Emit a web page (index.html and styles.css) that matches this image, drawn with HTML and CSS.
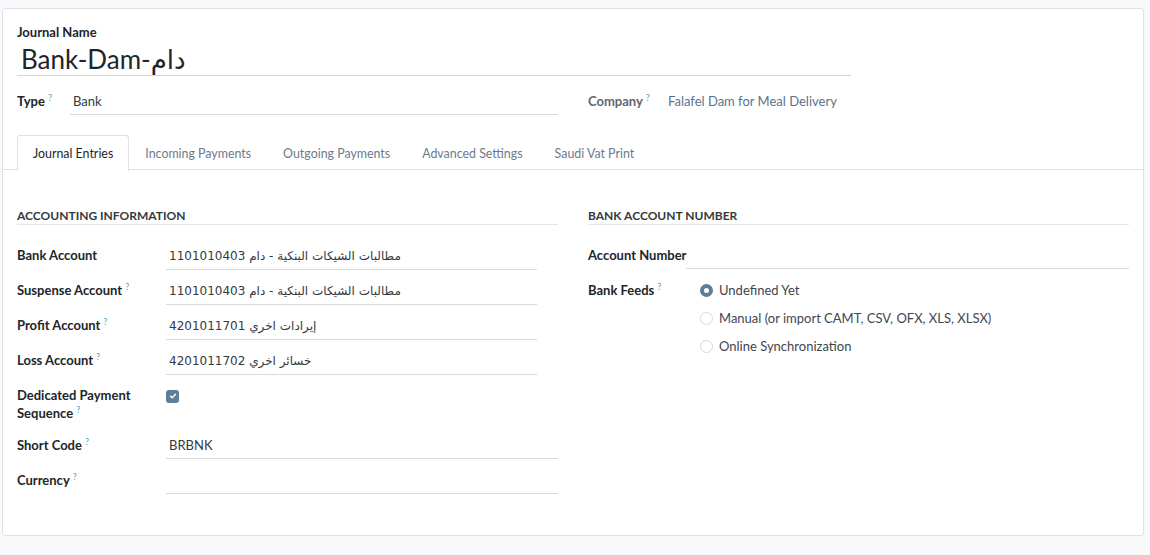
FILE: index.html
```html
<!DOCTYPE html>
<html lang="en">
<head>
<meta charset="utf-8">
<title>Journal</title>
<link rel="stylesheet" href="styles.css">
</head>
<body>
<div class="sheet">
  <div class="head">
    <div class="title-label">Journal Name</div>
    <div class="title-field">Bank-Dam-دام</div>
    <div class="top-row">
      <div class="pair">
        <div class="lbl lbl-type">Type<sup>?</sup></div>
        <div class="val val-type">Bank</div>
      </div>
      <div class="pair">
        <div class="lbl lbl-muted lbl-company">Company<sup>?</sup></div>
        <div class="val-link">Falafel Dam for Meal Delivery</div>
      </div>
    </div>
  </div>

  <div class="tabs">
    <div class="tab active">Journal Entries</div>
    <div class="tab">Incoming Payments</div>
    <div class="tab">Outgoing Payments</div>
    <div class="tab">Advanced Settings</div>
    <div class="tab">Saudi Vat Print</div>
  </div>

  <div class="content">
    <div class="group">
      <div class="sep">ACCOUNTING INFORMATION</div>
      <div class="row">
        <div class="lbl">Bank Account</div>
        <div class="val m2o"><span class="ar">1101010403 مطالبات الشيكات البنكية - دام</span></div>
      </div>
      <div class="row">
        <div class="lbl">Suspense Account<sup>?</sup></div>
        <div class="val m2o"><span class="ar">1101010403 مطالبات الشيكات البنكية - دام</span></div>
      </div>
      <div class="row">
        <div class="lbl">Profit Account<sup>?</sup></div>
        <div class="val m2o"><span class="ar">4201011701 إيرادات اخري</span></div>
      </div>
      <div class="row">
        <div class="lbl">Loss Account<sup>?</sup></div>
        <div class="val m2o"><span class="ar">4201011702 خسائر اخري</span></div>
      </div>
      <div class="row row-tall">
        <div class="lbl lbl-wrap">Dedicated Payment<br>Sequence<sup>?</sup></div>
        <div class="val-plain">
          <span class="checkbox">
            <svg width="8" height="8" viewBox="0 0 8 8"><path d="M1.5 4.2 L3.2 5.8 L6.5 2.3" fill="none" stroke="#fff" stroke-width="1.4" stroke-linecap="round" stroke-linejoin="round"/></svg>
          </span>
        </div>
      </div>
      <div class="row">
        <div class="lbl">Short Code<sup>?</sup></div>
        <div class="val">BRBNK</div>
      </div>
      <div class="row">
        <div class="lbl">Currency<sup>?</sup></div>
        <div class="val">&nbsp;</div>
      </div>
    </div>

    <div class="group">
      <div class="sep">BANK ACCOUNT NUMBER</div>
      <div class="row">
        <div class="lbl lbl-narrow">Account Number</div>
        <div class="val">&nbsp;</div>
      </div>
      <div class="row">
        <div class="lbl lbl-narrow">Bank Feeds<sup>?</sup></div>
        <div class="radios">
          <div class="radio-item"><span class="radio checked"></span>Undefined Yet</div>
          <div class="radio-item"><span class="radio"></span>Manual (or import CAMT, CSV, OFX, XLS, XLSX)</div>
          <div class="radio-item"><span class="radio"></span>Online Synchronization</div>
        </div>
      </div>
    </div>
  </div>
</div>
</body>
</html>
```

FILE: styles.css
```css
* { box-sizing: border-box; }
html, body { margin: 0; padding: 0; }
body {
  background: #f8f9fa;
  font-family: "Lato", "DejaVu Sans", sans-serif;
  font-size: 13px;
  color: #212529;
  width: 1150px;
  height: 555px;
  padding: 8px 6px 0 2px;
}
.sheet {
  background: #fff;
  border: 1px solid #dee2e6;
  border-radius: 3px;
  height: 528px;
}
.head {
  padding: 15px 292px 0 14px;
}
.title-label {
  font-weight: 700;
  line-height: 17px;
  height: 17px;
}
.title-field {
  font-size: 26px;
  line-height: 32px;
  padding: 0 0 0 4px;
  margin-top: 2px;
  border-bottom: 1px solid #ced4da;
  height: 33px;
}
.top-row {
  display: grid;
  grid-template-columns: 541px 1fr;
  column-gap: 30px;
  margin-top: 17px;
}
.pair { display: flex; align-items: flex-start; }
.lbl {
  font-weight: 700;
  line-height: 17px;
  flex: 0 0 149px;
  color: #212529;
  white-space: nowrap;
}
.lbl-wrap { line-height: 18px; margin-top: -1px; }
.lbl sup {
  color: #4aa3c4;
  font-size: 9px;
  font-weight: 400;
  margin-left: 3px;
  line-height: 0;
  vertical-align: 5px;
}
.lbl-type { flex-basis: 53px; }
.lbl-company { flex-basis: 80px; }
.lbl-muted { color: #5f666d; }
.val {
  flex: 1;
  border-bottom: 1px solid #d7dbe0;
  line-height: 17px;
  padding: 0 3px 4px;
  color: #343a40;
}
.val-link { color: #5c738f; line-height: 17px; }
.tabs {
  display: flex;
  margin-top: 20px;
  padding-left: 14px;
  border-bottom: 1px solid #dee2e6;
  height: 35px;
}
.tab {
  padding: 0 15px;
  line-height: 35px;
  font-size: 12.4px;
  color: #6c7a8b;
  border: 1px solid transparent;
  border-bottom: none;
  border-radius: 3px 3px 0 0;
}
.tab.active {
  color: #212529;
  border-color: #dee2e6;
  background: #fff;
  margin-bottom: -1px;
  height: 36px;
}
.content {
  display: grid;
  grid-template-columns: 541px 541px;
  column-gap: 30px;
  padding: 37px 14px 0 14px;
}
.sep {
  font-weight: 700;
  font-size: 12px;
  color: #343a40;
  line-height: 17px;
  padding-bottom: 0;
  border-bottom: 1px solid #e4e7ea;
  margin-bottom: 22px;
}
.row {
  display: flex;
  align-items: flex-start;
  min-height: 35px;
}
.row-tall { min-height: 50px; }
.row .val { flex: 1; }
.row .val.m2o { flex: 0 0 371px; }
.ar { font-family: "DejaVu Sans", "Lato", sans-serif; font-size: 12px; }
.lbl-narrow { flex-basis: 98px; }
.val-plain { flex: 1; }
.checkbox {
  display: inline-flex;
  align-items: center;
  justify-content: center;
  width: 13px;
  height: 13px;
  border-radius: 3px;
  background: #5f7d99;
  margin-top: 1px;
}
.checkbox svg { display: block; }
.radios {
  display: flex;
  flex-direction: column;
  gap: 11px;
  padding-left: 14px;
  padding-bottom: 8px;
}
.radio-item {
  display: flex;
  align-items: center;
  line-height: 17px;
  height: 17px;
  color: #3f4650;
}
.radio {
  width: 13px;
  height: 13px;
  border-radius: 50%;
  border: 1px solid #d5d9de;
  margin-right: 6px;
  background: #fff;
}
.radio.checked {
  border: 4px solid #5f7d99;
}
```
